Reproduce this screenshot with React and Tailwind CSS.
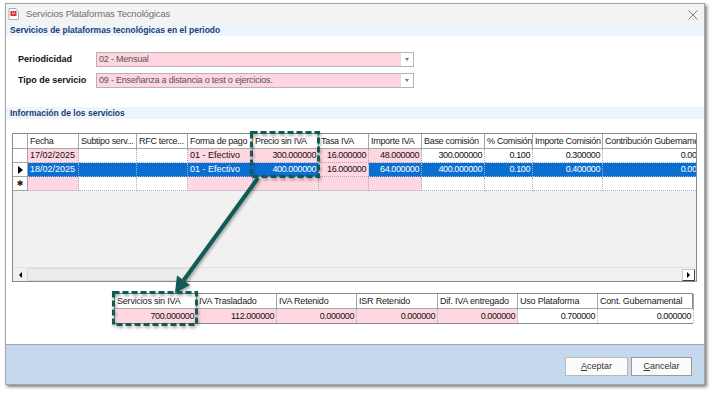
import React from "react";

const W = [
  "w-[15px]",
  "w-[51px]",
  "w-[58px]",
  "w-[51px]",
  "w-[65px]",
  "w-[66px]",
  "w-[50px]",
  "w-[53px]",
  "w-[63px]",
  "w-[48px]",
  "w-[70px]",
  "w-[115px]",
];

const HEAD = [
  "",
  "Fecha",
  "Subtipo serv...",
  "RFC terce...",
  "Forma de pago",
  "Precio sin IVA",
  "Tasa IVA",
  "Importe IVA",
  "Base comisión",
  "% Comisión",
  "Importe Comisión",
  "Contribución Gubernamental",
];

const PINK = [false, true, false, false, true, true, true, true, false, false, false, false];
const RIGHT = [false, false, false, false, false, true, true, true, true, true, true, true];

const ROWS = [
  { mark: "", sel: false, v: ["", "17/02/2025", "", "", "01 - Efectivo", "300.000000", "16.000000", "48.000000", "300.000000", "0.100", "0.300000", "0.000000"] },
  { mark: "arrow", sel: true, v: ["", "18/02/2025", "", "", "01 - Efectivo", "400.000000", "16.000000", "64.000000", "400.000000", "0.100", "0.400000", "0.000000"] },
  { mark: "star", sel: false, v: ["", "", "", "", "", "", "", "", "", "", "", ""] },
];

const TW = ["w-[82px]", "w-[80px]", "w-[80px]", "w-[81px]", "w-[80px]", "w-[80px]", "w-[96px]"];
const THEAD = ["Servicios sin IVA", "IVA Trasladado", "IVA Retenido", "ISR Retenido", "Dif. IVA entregado", "Uso Plataforma", "Cont. Gubernamental"];
const TVAL = ["700.000000", "112.000000", "0.000000", "0.000000", "0.000000", "0.700000", "0.000000"];
const TPINK = [true, true, true, true, true, false, false];

function Combo({ text }) {
  return (
    <div className="w-[318px] h-[15px] border border-[#b4b4b4] flex bg-[#ffd6df]">
      <div className="flex-1 pl-[2px] text-[9px] tracking-[-0.2px] leading-[13px] text-[#555] whitespace-nowrap overflow-hidden">{text}</div>
      <div className="w-[13px] h-full bg-white border-l border-[#e0e0e0] flex items-center justify-center">
        <div className="w-0 h-0 border-l-[2.5px] border-r-[2.5px] border-t-[3px] border-l-transparent border-r-transparent border-t-[#777]" />
      </div>
    </div>
  );
}

export default function App() {
  return (
    <div className="w-[714px] h-[393px] bg-white relative overflow-hidden font-['Liberation_Sans',Arial,sans-serif]">
      <div className="ml-[5px] mt-[3px] w-[700px] h-[382px] border border-[#a5a5a5] bg-white flex flex-col shadow-[2px_2px_3px_rgba(0,0,0,0.5)]">
        {/* Title bar */}
        <div className="h-[20px] bg-[#f3f3f3] flex items-center pl-[2px] pr-[5px]">
          <svg width="11" height="12" viewBox="0 0 11 12" className="shrink-0">
            <path d="M1 0.5 H7.5 L10.5 3.5 V11.5 H1 Z" fill="#fff" stroke="#9a9a9a" strokeWidth="0.8" />
            <rect x="2.5" y="3" width="6" height="5" fill="#d8332c" />
            <path d="M4 5 Q5.5 7 7 5" stroke="#fff" strokeWidth="0.8" fill="none" />
            <rect x="4.2" y="3.7" width="0.8" height="0.8" fill="#fff" />
            <rect x="6" y="3.7" width="0.8" height="0.8" fill="#fff" />
          </svg>
          <div className="ml-[7px] text-[9.5px] tracking-[-0.15px] text-[#707070] whitespace-nowrap">Servicios Plataformas Tecnológicas</div>
          <div className="flex-1" />
          <svg width="10" height="10" viewBox="0 0 10 10" className="mr-[1px] mt-[1px]">
            <path d="M0.5 0.5 L9.5 9.5 M9.5 0.5 L0.5 9.5" stroke="#707070" strokeWidth="0.9" />
          </svg>
        </div>
        {/* Section 1 */}
        <div className="h-[12px] bg-[#edf4fc] pl-[4px] text-[8.5px] leading-[12px] font-bold text-[#1e3d73] whitespace-nowrap">
          Servicios de plataformas tecnológicas en el periodo
        </div>
        {/* Body */}
        <div className="h-[308px] flex flex-col pt-[16px]">
          <div className="flex items-center pl-[12px]">
            <div className="w-[78px] text-[9px] font-bold text-[#111]">Periodicidad</div>
            <Combo text="02 - Mensual" />
          </div>
          <div className="flex items-center pl-[12px] mt-[6px]">
            <div className="w-[78px] text-[9px] font-bold text-[#111]">Tipo de servicio</div>
            <Combo text="09 - Enseñanza a distancia o test o ejercicios." />
          </div>
          <div className="mt-[19px] h-[12px] bg-[#edf4fc] pl-[4px] text-[8.5px] leading-[12px] font-bold text-[#1e3d73] whitespace-nowrap">
            Información de los servicios
          </div>
          {/* Grid */}
          <div className="mt-[14px] ml-[6px] w-[685px] h-[149px] border border-[#8a8a8a] bg-[#f1f1f1] flex flex-col overflow-hidden">
            <div className="flex shrink-0">
              {HEAD.map((h, i) => (
                <div
                  key={i}
                  className={`${W[i]} shrink-0 h-[15px] bg-white border-r border-b border-[#a6a6a6] px-[2px] text-[9px] tracking-[-0.3px] leading-[14px] text-[#1a1a1a] whitespace-nowrap overflow-hidden`}
                >
                  {h}
                </div>
              ))}
            </div>
            {ROWS.map((r, ri) => (
              <div key={ri} className="flex shrink-0">
                {r.v.map((val, i) => {
                  if (i === 0) {
                    return (
                      <div key={i} className={`${W[0]} shrink-0 h-[14px] bg-white border-r border-b border-[#a6a6a6] flex items-center justify-center`}>
                        {r.mark === "arrow" && (
                          <div className="w-0 h-0 border-t-[4px] border-b-[4px] border-l-[5px] border-t-transparent border-b-transparent border-l-black" />
                        )}
                        {r.mark === "star" && <span className="text-[8px] leading-[8px] text-[#222] font-['DejaVu_Sans',sans-serif]">✱</span>}
                      </div>
                    );
                  }
                  let bg = PINK[i] ? "bg-[#ffd7e0]" : "bg-white";
                  let color = "text-[#111]";
                  if (r.sel && i !== 6) {
                    bg = "bg-[#0b6fd2]";
                    color = "text-white";
                  }
                  return (
                    <div
                      key={i}
                      className={`${W[i]} ${bg} ${color} ${RIGHT[i] ? "text-right tracking-[-0.4px]" : "text-left"} shrink-0 h-[14px] border-r border-b border-dotted border-[#9eafc8] px-[2px] text-[9px] leading-[13px] whitespace-nowrap overflow-hidden`}
                    >
                      {val}
                    </div>
                  );
                })}
              </div>
            ))}
            <div className="flex-1" />
            {/* scrollbar */}
            <div className="h-[14px] shrink-0 flex bg-[#f0f0f0] border-t border-[#e4e4e4]">
              <div className="w-[14px] h-full flex items-center justify-center">
                <div className="w-0 h-0 border-t-[3px] border-b-[3px] border-r-[3px] border-t-transparent border-b-transparent border-r-black" />
              </div>
              <div className="w-[164px] h-full bg-[#ececec] border border-[#dadada]" />
              <div className="flex-1" />
              <div className="w-[13px] h-[12px] mt-[1px] mr-[1px] bg-white border border-[#c8c8c8] border-r-[#404040] border-b-[#404040] flex items-center justify-center">
                <div className="w-0 h-0 border-t-[3px] border-b-[3px] border-l-[3px] border-t-transparent border-b-transparent border-l-black" />
              </div>
            </div>
          </div>
          {/* Totals */}
          <div className="mt-[11px] ml-[108px] w-[579px] border border-[#8a8a8a] bg-white flex flex-col">
            <div className="flex">
              {THEAD.map((h, i) => (
                <div
                  key={i}
                  className={`${TW[i]} shrink-0 h-[15px] border-r border-b border-[#a6a6a6] px-[2px] text-[9px] tracking-[-0.2px] leading-[14px] text-[#1a1a1a] whitespace-nowrap overflow-hidden`}
                >
                  {h}
                </div>
              ))}
            </div>
            <div className="flex">
              {TVAL.map((v, i) => (
                <div
                  key={i}
                  className={`${TW[i]} ${TPINK[i] ? "bg-[#ffd7e0]" : "bg-white"} shrink-0 h-[14px] border-r border-dotted border-[#9eafc8] px-[2px] text-right tracking-[-0.4px] text-[9px] leading-[14px] text-[#111] whitespace-nowrap overflow-hidden`}
                >
                  {v}
                </div>
              ))}
            </div>
          </div>
        </div>
        {/* Footer */}
        <div className="h-[40px] border-t border-[#a8a8a8] bg-[#c4d8ee] flex justify-end items-start pt-[12px] pr-[12px] gap-[3px]">
          <div className="w-[63px] h-[19px] bg-[#fbfbfb] border border-[#b9b9b9] flex items-center justify-center text-[9px] text-[#333]">
            <span className="underline">A</span>ceptar
          </div>
          <div className="w-[61px] h-[19px] bg-[#fbfbfb] border border-[#9a9a9a] flex items-center justify-center text-[9px] text-[#333]">
            <span className="underline">C</span>ancelar
          </div>
        </div>
      </div>

      {/* Annotation overlay */}
      <svg
        width="714"
        height="393"
        className="absolute left-0 top-0 pointer-events-none drop-shadow-[1px_2px_1.5px_rgba(0,0,0,0.35)]"
      >
        <rect x="251.5" y="132.5" width="67" height="44" fill="none" stroke="#0f5b55" strokeWidth="3" strokeDasharray="6 3" />
        <rect x="113.5" y="292.5" width="83" height="32" fill="none" stroke="#0f5b55" strokeWidth="3" strokeDasharray="6 3" />
        <line x1="258" y1="178" x2="183.5" y2="280.5" stroke="#0f5b55" strokeWidth="4" />
        <polygon points="175,293 190,285 177,275.5" fill="#0f5b55" />
      </svg>
    </div>
  );
}
